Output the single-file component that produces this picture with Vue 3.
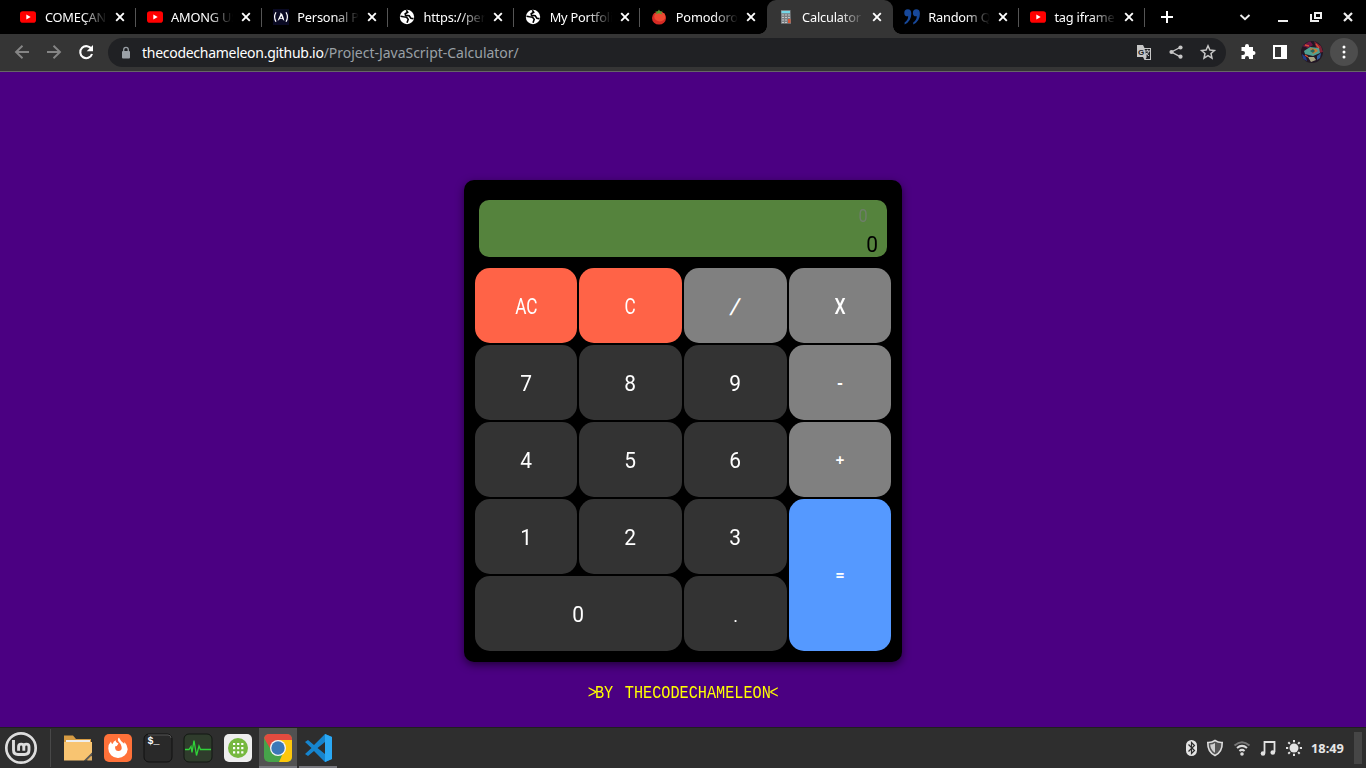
<script setup>
const tabs = [
  { icon: 'youtube', title: 'COMEÇANDO', sep: true },
  { icon: 'youtube', title: 'AMONG US', sep: true },
  { icon: 'fcc', title: 'Personal Po', sep: true },
  { icon: 'globe', title: 'https://pers', sep: true },
  { icon: 'globe', title: 'My Portfoli', sep: true },
  { icon: 'tomato', title: 'Pomodoro', sep: false },
  { icon: 'calc', title: 'Calculator', active: true, sep: false },
  { icon: 'quote', title: 'Random Qu', sep: true },
  { icon: 'youtube', title: 'tag iframe ', sep: true },
]

const keys = [
  { label: 'AC', kind: 'clear' },
  { label: 'C', kind: 'clear' },
  { label: '/', kind: 'op slash' },
  { label: 'X', kind: 'op' },
  { label: '7' }, { label: '8' }, { label: '9' },
  { label: '-', kind: 'op sign' },
  { label: '4' }, { label: '5' }, { label: '6' },
  { label: '+', kind: 'op sign' },
  { label: '1' }, { label: '2' }, { label: '3' },
  { label: '=', kind: 'equals sign' },
  { label: '0', kind: 'wide' },
  { label: '.', kind: 'dot' },
]
</script>

<template>
  <div class="screen">
    <div class="tabstrip">
      <div v-for="(t, i) in tabs" :key="i" class="tab" :class="{ active: t.active, sep: t.sep }">
        <svg class="fav" viewBox="0 0 16 16">
          <template v-if="t.icon === 'youtube'">
            <rect y="2.3" width="16" height="11.4" rx="2.8" fill="#f00" />
            <path d="M6.3 5.5v5l4.4-2.5z" fill="#fff" />
          </template>
          <template v-else-if="t.icon === 'fcc'">
            <rect width="16" height="16" fill="#0a0a23" />
            <path d="M3 3.3Q.2 8 3 12.7M13 3.3Q15.800 8 13 12.700" fill="none" stroke="#fff" stroke-width="1.2" />
            <path d="M4.700 12q.5-2.500 1.700-4.600Q7.700 5.500 7.400 3.600q2.400 1.500 2.900 4.200Q11 9.500 11.300 12L9.300 10H6.800z" fill="#fff" />
            <path d="M7.200 9.300h2L8.300 6.800z" fill="#0a0a23" />
          </template>
          <template v-else-if="t.icon === 'globe'">
            <circle cx="8" cy="8" r="7.200" fill="#fff" />
            <path d="M1.500 7.200 4.500 7.800 7.600 8.200 9.200 10.400 8 13.800M7.300 1.200 8.700 3.200 6.200 4.700l.3 1.600 3.700.4 1.700 2.500 2.600.4" fill="none" stroke="#000" stroke-width="1.600" />
          </template>
          <template v-else-if="t.icon === 'tomato'">
            <ellipse cx="8" cy="9" rx="7" ry="6.600" fill="#d52a24" />
            <ellipse cx="8.800" cy="7.700" rx="5.600" ry="4.800" fill="#ee4931" />
            <path d="M8 4.200 4.300 5.200 6 3 3.500 2.300l3.300-.1L8 .4l1 1.800 3.200-.4L10 3.100l1.600 2.500z" fill="#579a32" />
          </template>
          <template v-else-if="t.icon === 'calc'">
            <path d="M3 1h9.500l.5 13.700H3z" fill="#7c8185" />
            <path d="M3.500 2h8.500v2.200H3.500z" fill="#76d8e8" />
            <path d="M4 6h8M4 8.500h8M4 11h8M4 13.500h8" stroke="#c4c6c8" stroke-dasharray="2 1" />
            <path d="M10 10h2.500v4H10z" fill="#d95635" />
          </template>
          <template v-else>
            <path d="M.3 3.900Q.3.300 3.700.300q3.600 0 3.600 4.400 0 7.600-6.700 10.700v-2Q4.100 11.300 4.200 7.300.3 7.800.3 3.900M8.900 3.900Q8.900.300 12.300.300q3.600 0 3.600 4.400 0 7.600-6.700 10.700v-2q3.500-2.100 3.600-6.100-3.900.5-3.900-3.400" fill="#17489a" />
          </template>
        </svg>
        <span class="title">{{ t.title }}</span>
        <svg class="close" viewBox="0 0 10 10"><path d="m1.200 1.200 7.600 7.600m0-7.600L1.200 8.800" stroke="#fff" stroke-width="1.900" /></svg>
      </div>
      <svg class="plus" viewBox="0 0 14 14"><path d="M7 1v12M1 7h12" stroke="#fff" stroke-width="2" /></svg>
      <svg class="window-controls" viewBox="0 0 126 34">
        <path d="m10.500 15 4.500 4.300 4.500-4.300" fill="none" stroke="#eee" stroke-width="1.900" />
        <path d="M48 21h10" stroke="#eee" stroke-width="2" />
        <path d="M85 13h6v5h-6z" fill="none" stroke="#eee" stroke-width="2" />
        <path d="M81 14v7h8" fill="none" stroke="#eee" stroke-width="2" />
        <path d="m114 13 8 8m0-8-8 8" stroke="#eee" stroke-width="2.200" />
      </svg>
    </div>

    <div class="toolbar">
      <svg class="nav" viewBox="0 0 108 37">
        <g fill="none" stroke="#858585" stroke-width="1.900">
          <path d="M29 18H16m6.500-6.300L16 18l6.500 6.300M47 18h13m-6.500-6.300L60 18l-6.500 6.300" />
        </g>
        <path d="M91.500 15.200A6 6 0 1 0 92 20" fill="none" stroke="#fff" stroke-width="2.100" />
        <path d="M93 11v6.300h-6.300z" fill="#fff" />
      </svg>
      <div class="omnibox">
        <svg class="lock" viewBox="0 0 10 14"><rect x="1" y="5" width="8" height="7.500" rx="1" fill="#9aa0a6" /><path d="M2.700 5.500V3.700a2.300 2.300 0 0 1 4.600 0v1.800" fill="none" stroke="#9aa0a6" stroke-width="1.300" /></svg>
        <span class="url"><b>thecodechameleon.github.io</b>/Project-JavaScript-Calculator/</span>
        <svg class="omni-icons" viewBox="0 0 92 29">
          <path d="M2 7h6l1.500 3H16v12H9.500L8 19H2z" fill="#c7c7c7" />
          <path d="M9.600 11H15v10h-4.300l1-2z" fill="#202124" />
          <text x="3" y="16.500" class="g">G</text>
          <path d="M10 13h5m-2.500-1.300V13m1.300 0q-.6 3-3.300 4.800m.5-3q1 2 3 3" fill="none" stroke="#c7c7c7" />
          <path d="M45 9.500 36.500 14l8.500 4.600" fill="none" stroke="#c7c7c7" stroke-width="1.400" />
          <circle cx="45.500" cy="9.500" r="2.100" fill="#c7c7c7" /><circle cx="36.500" cy="14" r="2.100" fill="#c7c7c7" /><circle cx="45.500" cy="18.700" r="2.100" fill="#c7c7c7" />
          <path d="m73 7.800 1.900 4.200 4.500.5-3.400 3 1 4.600-4-2.400-4 2.400 1-4.600-3.400-3 4.500-.5z" fill="none" stroke="#c7c7c7" stroke-width="1.500" />
        </svg>
      </div>
      <svg class="actions" viewBox="0 0 140 37">
        <defs>
          <clipPath id="avatar-clip"><circle cx="86" cy="18" r="11" /></clipPath>
          <filter id="soft"><feGaussianBlur stdDeviation=".7" /></filter>
        </defs>
        <path d="M15.500 13H19v-1a2 2 0 0 1 4 0v1h4v4h.5a2 2 0 0 1 0 4H27v4h-4v-1a2 2 0 0 0-4 0v1h-3.500v-4H17a2 2 0 0 0 0-4h-1.500z" fill="#fff" />
        <path d="M47 11h14v14H47zM49 13v10h6V13z" fill="#fff" fill-rule="evenodd" />
        <g clip-path="url(#avatar-clip)">
          <path d="M75 7h22v22H75z" fill="#221725" />
          <g filter="url(#soft)">
            <path d="m76 12 8-5 3 4-5 3z" fill="#6c1745" /><path d="m88 7 7 5 2 6-5 1z" fill="#7d2136" />
            <path d="m78 17 6-4 9 1 1 5-7 3-8-2z" fill="#4f9f91" /><path d="m84 14 6 1 2 2-5 3z" fill="#c77831" />
            <path d="m84 17 3-2 2 2-2 2z" fill="#28655f" /><path d="m82 23 6 0 2 3-5 2z" fill="#a8a383" />
            <path d="m76 20 4 3 1 4-4-2z" fill="#243d8c" /><path d="m91 22 4-3-1 5-3 2z" fill="#2f5da0" />
            <path d="m79 11 4 1M90 10l3 4M79 21l3 2" stroke="#d94d30" stroke-width="1.300" />
          </g>
        </g>
        <circle cx="118" cy="18" r="14" fill="#4d4d4d" />
        <path d="M118 13v.1m0 4.900v.1m0 4.900v.1" stroke="#fff" stroke-width="3" stroke-linecap="round" />
      </svg>
    </div>

    <main class="page">
      <div class="calculator">
        <div class="display">
          <span class="formula">0</span>
          <span class="output">0</span>
        </div>
        <div class="pad">
          <button v-for="k in keys" :key="k.label" :class="['key', k.kind]"><span>{{ k.label }}</span></button>
        </div>
      </div>
      <div class="credit"><span class="angle">&gt;</span><span class="by">BY</span><span class="author">THECODECHAMELEON</span><span>&lt;</span></div>
    </main>

    <div class="taskbar">
      <div class="slot mint">
        <svg viewBox="0 0 34 34"><circle cx="17" cy="17" r="14.700" fill="none" stroke="#ddd" stroke-width="2.700" /><path d="M9.500 9v10q0 4.500 4.500 4.500h6.500q4.500 0 4.500-4.500v-3.300a2.600 2.600 0 0 0-5.200 0v4m0-4a2.600 2.600 0 0 0-5.200 0v4" fill="none" stroke="#ddd" stroke-width="2.900" /></svg>
      </div>
      <div class="divider"></div>
      <div class="slot"><svg viewBox="0 0 30 30"><path d="M1 2.500h9l3 3.500h15v21H1z" fill="#d69b43" /><path d="M3 7h24v3H3z" fill="#eee" /><path d="M1 9h28v11l-8 7.500H1z" fill="#f8c471" /><path d="m21 27.500 8-8v2.500l-5.500 5.500z" fill="#595959" /><path d="m24 27.500 5-5v5z" fill="#dcae66" /></svg></div>
      <div class="slot"><svg viewBox="0 0 30 30"><rect x="1" y="1" width="28" height="28" rx="5" fill="#ff7139" /><path d="M15 25a9.500 9.500 0 0 1-9.700-9.500q0-4.500 2.700-7 .3 2 1.500 2.500Q10.500 8 13 7.200q-1 2 2.500 3.200-1 2.600-3.500 3 0 5 4 4.500 3.500-.6 2.500-4.500-.7-3-3-5Q14 6 16 4.500q1 3 5.200 6.200l.3-1.800q3.200 3.300 3.200 7.300A9.600 9.600 0 0 1 15 25" fill="#fff" /></svg></div>
      <div class="slot"><svg viewBox="0 0 30 30"><rect x="1" y="1" width="28" height="28" rx="5" fill="#292929" stroke="#101010" /><path d="M5 2h20q3 0 3 3" fill="none" stroke="#555" /><text x="4.500" y="10.500" class="prompt">$_</text></svg></div>
      <div class="slot"><svg viewBox="0 0 30 30"><rect x="1" y="1" width="28" height="28" rx="5" fill="#2f3c2c" stroke="#121712" /><path d="M2 16.500h4l2-3 1 6 2-12 2.500 15L16 13l1.500 3.500H28" fill="none" stroke="#30d339" stroke-width="1.300" /></svg></div>
      <div class="slot"><svg viewBox="0 0 30 30"><rect x="1" y="1" width="28" height="28" rx="5" fill="#eee" /><circle cx="15" cy="15" r="10" fill="#76b83f" /><path d="M10 11h10.500M10 15.200h10.500M10 19.400h10.500" stroke="#fff" stroke-width="2.200" stroke-dasharray="2.200 1.900" /></svg></div>
      <div class="slot running focused"><svg viewBox="0 0 30 30"><defs><clipPath id="chrome-clip"><rect x="1" y="1" width="28" height="28" rx="5" /></clipPath></defs><g clip-path="url(#chrome-clip)"><path d="M1 1h28v28H1z" fill="#46a34a" /><path d="M15 7h14v22H16l5-11z" fill="#fdc70b" /><path d="M1 1h28v6H15L8 17 1 5z" fill="#e34b3f" /></g><circle cx="15" cy="15" r="8" fill="#f5f5f5" /><circle cx="15" cy="15" r="6.700" fill="#3b78b8" /></svg></div>
      <div class="slot running"><svg viewBox="0 0 30 30"><path d="m22 1 7 3v22l-7 3-11-11-6 5-3-2 6.500-6L2 9l3-2 6 5zM22 9l-7.500 6 7.500 6z" fill="#1685cf" fill-rule="evenodd" /><path d="m22 1 7 3v22l-7 3z" fill="#2aa9f5" /></svg></div>
      <div class="tray">
        <svg viewBox="0 0 130 34">
          <rect x="6" y="9" width="11" height="16" rx="5.500" fill="#e4e4e4" /><path d="m8.500 13.500 6 6-3 3v-11l3 3-6 6" fill="none" stroke="#2d2d2d" stroke-width="1.200" />
          <path d="M35 9.500q-3.500 2.300-7.200 2Q27.500 21 35 24.500 42.500 21 42.200 11.500q-3.700.3-7.200-2z" fill="#555" stroke="#ddd" stroke-width="1.600" /><path d="M35 12q-2.300 1.500-4.800 1.600.2 5.400 4.800 8.200z" fill="#d0d0d0" />
          <g fill="none" stroke-width="2"><path d="M54.500 14.500Q62 8 69.500 14.500" stroke="#777" /><path d="M57 17q5-4.200 10 0M59.400 20q2.600-2.200 5.200 0" stroke="#ddd" /></g><circle cx="62" cy="23" r="1.800" fill="#ddd" />
          <path d="M84.500 22V11h10v10" fill="none" stroke="#e2e2e2" stroke-width="1.800" /><circle cx="83" cy="22.500" r="2.300" fill="#e2e2e2" /><circle cx="92.800" cy="21.500" r="2.300" fill="#e2e2e2" />
          <circle cx="114" cy="17" r="4.500" fill="#e2e2e2" /><path d="M114 9v2.200m0 11.600V25m-8-8h2.200m11.600 0h2.200m-13.700-5.700 1.600 1.600m8.200 8.200 1.600 1.600m0-11.400-1.600 1.600m-8.200 8.200-1.600 1.600" stroke="#e2e2e2" stroke-width="2" />
        </svg>
        <span class="clock">18:49</span>
        <div class="show-desktop"></div>
      </div>
    </div>
  </div>
</template>

<style>
body { margin: 0; overflow: hidden; }
</style>

<style scoped>
* { box-sizing: border-box; }
svg { display: block; flex: none; }
.screen { width: 1366px; height: 768px; display: flex; flex-direction: column; overflow: hidden; background: indigo; font-family: "Noto Sans", "Open Sans", sans-serif; }
.tabstrip { height: 34px; background: #000; display: flex; align-items: center; padding-left: 9.500px; flex: none; }
.tab { position: relative; width: 126.200px; height: 34px; display: flex; align-items: center; padding: 0 10.900px; flex: none; }
.tab.sep::after { content: ""; position: absolute; right: 0; top: 8px; width: 1px; height: 19px; background: #555; }
.tab.active { background: #353535; border-radius: 9px 9px 0 0; }
.tab.active::before, .tab.active::after { content: ""; position: absolute; bottom: 0; width: 8px; height: 8px; }
.tab.active::before { left: -8px; background: radial-gradient(circle at 0 0, transparent 7.500px, #353535 8px); }
.tab.active::after { right: -8px; background: radial-gradient(circle at 100% 0, transparent 7.500px, #353535 8px); }
.fav { width: 16px; height: 16px; }
.title { width: 62px; margin-left: 8.500px; overflow: hidden; white-space: nowrap; color: #fff; font-size: 12.800px; line-height: 20px; letter-spacing: -.2px; -webkit-mask-image: linear-gradient(90deg, #000 60%, transparent); mask-image: linear-gradient(90deg, #000 60%, transparent); }
.close { width: 10px; height: 10px; margin-left: 8px; }
.plus { width: 14px; height: 14px; margin-left: 15px; }
.window-controls { width: 126px; height: 34px; margin-left: auto; margin-right: 10px; }
.toolbar { height: 38px; background: #353535; border-bottom: 1px solid #666; display: flex; align-items: center; flex: none; }
.nav { width: 108px; height: 37px; }
.omnibox { width: 1118px; height: 29px; border-radius: 15px; background: #202124; display: flex; align-items: center; padding-left: 13px; }
.lock { width: 10px; height: 14px; }
.url { margin-left: 11px; color: #9aa0a6; font-size: 14px; line-height: 20px; white-space: nowrap; letter-spacing: -.02px; }
.url b { color: #fff; font-weight: 400; letter-spacing: -.28px; }
.omni-icons { width: 92px; height: 29px; margin-left: auto; margin-right: -1px; }
.g { font: bold 8px "Liberation Sans", sans-serif; fill: #222; }
.actions { width: 140px; height: 37px; }
.page { height: 655px; padding-top: 108px; background: indigo; display: flex; flex-direction: column; align-items: center; flex: none; }
.calculator { width: 438px; height: 482px; padding: 20px 11px 11px; border-radius: 10px; background: #000; box-shadow: 0 3px 9px rgba(0, 0, 0, .55); flex: none; }
.display { height: 57px; margin: 0 4px 11px; border-radius: 10px; background: #55833d; display: flex; flex-direction: column; align-items: flex-end; font-family: Roboto, sans-serif; }
.formula { color: #6e7e69; font-size: 18px; line-height: 20px; margin: 6px 19px 0 0; transform: scaleX(.9); }
.output { color: #000; font-size: 22px; line-height: 24px; margin: 7px 9px 0 0; transform: scaleX(.95); }
.pad { display: grid; grid-template-columns: 102px 103px 103px 102px; grid-template-rows: repeat(5, 75px); gap: 2px; }
.key { border: 0; padding: 2px 0 0; border-radius: 15px; background: #333; color: #fff; font: 22px Roboto, sans-serif; }
.key span { display: inline-block; transform: scaleX(.95); }
.clear { background: #ff6347; }
.clear span { transform: scaleX(.78); }
.op { background: gray; font-weight: 500; }
.op span { transform: scaleX(.8); }
.op.slash span { transform: skewX(-12deg); }
.equals { background: #59f; grid-column: 4; grid-row: 4 / 6; }
.sign { font: bold 14px "DejaVu Sans Mono", monospace; padding: 0; }
.sign.key span { transform: none; }
.wide { grid-column: 1 / 3; }
.dot { font-size: 19px; padding-top: 3px; }
.credit { margin-top: 19px; height: 24px; display: flex; justify-content: center; color: #ff0; font: 19px/24px "Liberation Mono", monospace; transform: scaleX(.8); white-space: pre; }
.angle { margin-right: -2.500px; }
.by { margin-right: 14.500px; }
.author { margin-right: -1.500px; }
.taskbar { height: 41px; background: #2e2e2e; border-top: 1px solid #202020; display: flex; align-items: center; flex: none; }
.slot { width: 38px; height: 40px; margin-right: 2px; display: flex; align-items: center; justify-content: center; flex: none; border-bottom: 2px solid transparent; padding-top: 1px; }
.slot svg { width: 30px; height: 30px; }
.slot.mint { width: 42px; margin: 0; padding-top: 2px; }
.slot.mint svg { width: 34px; height: 34px; }
.divider { width: 1px; height: 38px; margin: 0 8px; background: #484848; }
.slot.running { border-bottom-color: #77777d; }
.slot.focused { background: #515151; }
.prompt { fill: #fff; font: bold 10px "Liberation Mono", monospace; }
.tray { margin-left: auto; display: flex; align-items: center; height: 40px; }
.tray svg { width: 130px; height: 34px; }
.clock { width: 36px; margin-left: 1px; color: #e6e6e6; font-size: 12.800px; font-weight: 700; line-height: 20px; }
.show-desktop { width: 8px; height: 32px; margin: 0 4px 0 7px; background: #464646; }
</style>
